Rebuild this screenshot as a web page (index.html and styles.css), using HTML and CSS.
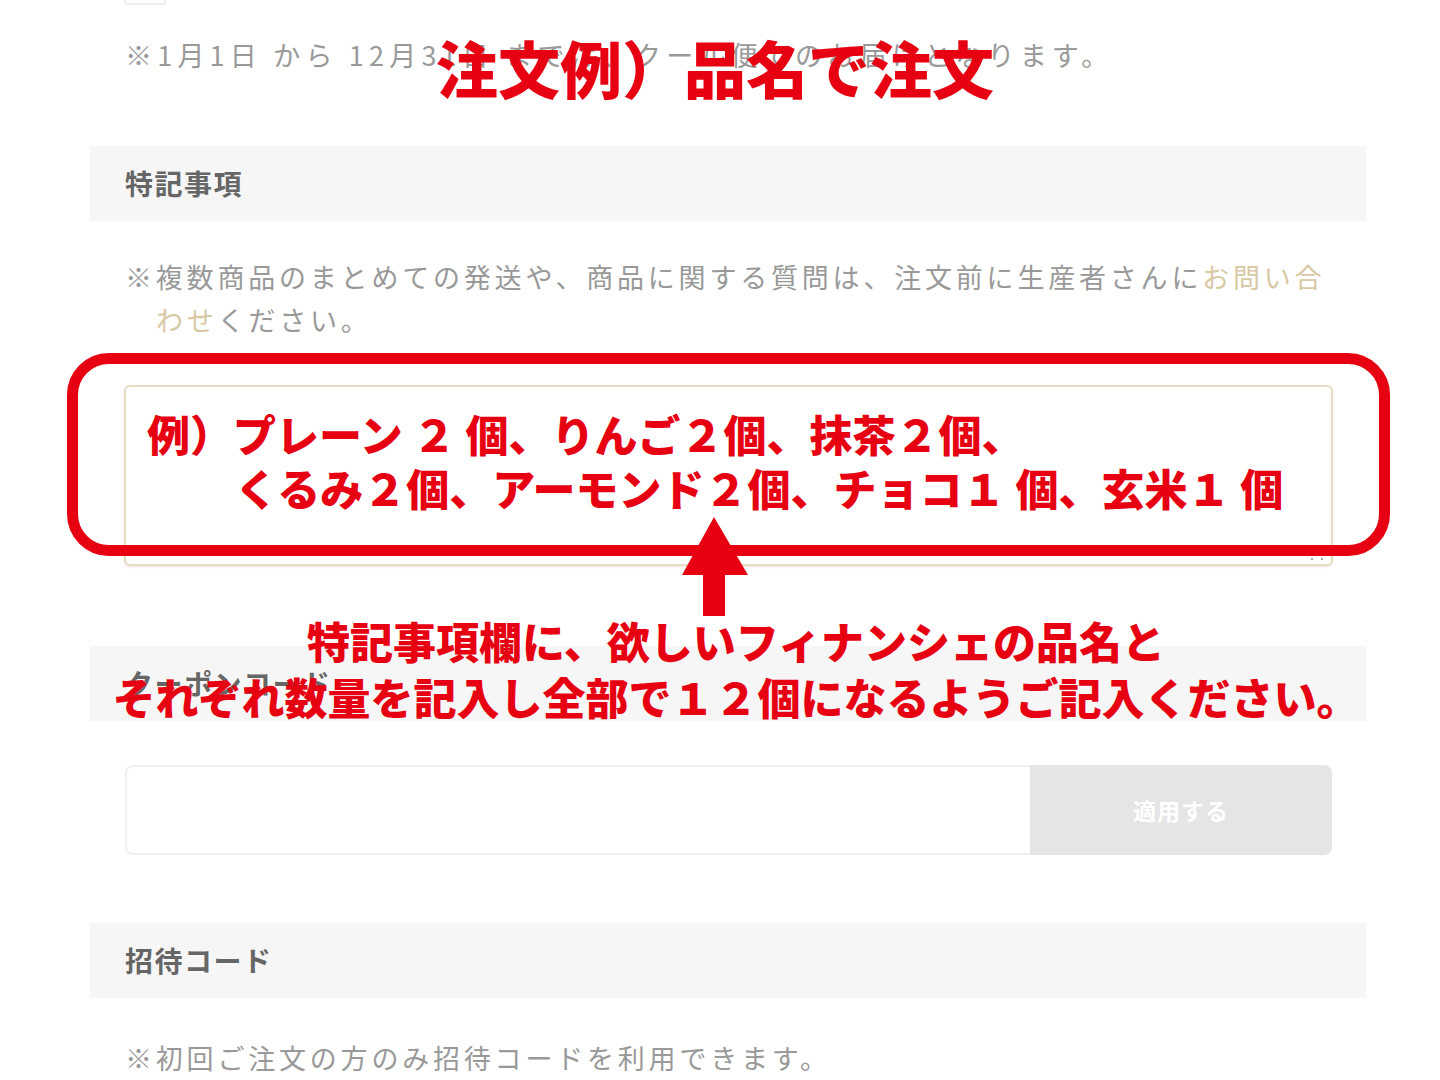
FILE: index.html
```html
<!DOCTYPE html>
<html lang="ja">
<head>
    <meta charset="UTF-8" />
    <title>ご注文手続き</title>
    <link rel="stylesheet" href="styles.css">
</head>
<body>
<div class="page">
  <div class="check"></div>
  <p class="note note-top">※1月1日 から 12月31日 までは、クール便でのお届けとなります。</p>

  <!-- 特記事項 -->
  <h2 class="block-head">特記事項</h2>
  <p class="note note-remarks">※複数商品のまとめての発送や、商品に関する質問は、注文前に生産者さんに<a href="#">お問い合わせ</a>ください。</p>
  <div class="remarks">
    <textarea class="remarks-box"></textarea>
    <span class="grip"></span>
  </div>

  <!-- クーポン -->
  <h2 class="block-head block-coupon">クーポンコード</h2>
  <div class="coupon">
    <input type="text" class="coupon-input" />
    <button type="button" class="coupon-btn">適用する</button>
  </div>

  <!-- 招待コード -->
  <h2 class="block-head block-invite">招待コード</h2>
  <p class="note note-invite">※初回ご注文の方のみ招待コードを利用できます。</p>

  <!-- 注文例の書き込み -->
  <div class="memo memo-title">注文例）品名で注文</div>
  <div class="memo-frame"></div>
  <div class="memo memo-sample">
    <div>例）プレーン ２ 個、りんご２個、抹茶２個、</div>
    <div class="indent">くるみ２個、アーモンド２個、チョコ１ 個、玄米１ 個</div>
  </div>
  <svg class="memo-arrow" width="66" height="100" viewBox="0 0 66 100">
    <polygon points="32,0 66,58 43,58 43,99 21,99 21,58 0,58" fill="#e60012" />
  </svg>
  <div class="memo memo-howto">
    <div>特記事項欄に、欲しいフィナンシェの品名と</div>
    <div>それぞれ数量を記入し全部で１２個になるようご記入ください。</div>
  </div>
</div>
</body>
</html>
```

FILE: styles.css
```css
body {
    margin: 0;
    background-color: #fff;
    font-family: "Noto Sans CJK JP", "Noto Sans", sans-serif;
}
.page {
    position: relative;
    width: 1276px;
    margin-left: 90px;
    padding-bottom: 40px;
}
.check {
    width: 38px;
    height: 3px;
    margin-left: 34px;
    border: 2px solid #eee;
    border-top: none;
    border-radius: 0 0 3px 3px;
}
.note {
    margin: 28px 0 0;
    padding: 0 35px;
    font-size: 27px;
    line-height: 43px;
    letter-spacing: 3.8px;
    color: #999;
}
.note a {
    color: #d8c8a4;
    text-decoration: none;
}
.note-top {
    letter-spacing: 5.2px;
}
.note-remarks {
    margin-top: 34px;
    padding-left: 66px;
    text-indent: -31px;
    padding-right: 30px;
}
.note-invite {
    margin-top: 38px;
}
.block-head {
    margin: 70px 0 0;
    height: 75px;
    padding-left: 35px;
    background-color: #f6f6f6;
    font-size: 28px;
    line-height: 75px;
    letter-spacing: 1.5px;
    font-weight: bold;
    color: #666;
}
.block-coupon {
    margin-top: 80px;
}
.block-invite {
    margin-top: 68px;
}
.remarks {
    position: relative;
    margin: 44px 33px 0 34px;
    height: 181px;
}
.remarks-box {
    display: block;
    box-sizing: border-box;
    width: 100%;
    height: 100%;
    border: 2px solid #e6dcc3;
    border-radius: 6px;
    box-shadow: 0 1px 2px rgba(180, 160, 110, 0.25);
    resize: none;
    background: #fff;
}
.grip {
    position: absolute;
    right: 10px;
    bottom: 6px;
    width: 8px;
    height: 6px;
    border-left: 2px dotted #aaa;
    border-right: 2px dotted #aaa;
}
.coupon {
    display: flex;
    margin: 44px 34px 0 35px;
    height: 90px;
}
.coupon-input {
    flex: 1;
    box-sizing: border-box;
    height: 100%;
    border: 2px solid #f0f0f0;
    border-right: none;
    border-radius: 8px 0 0 8px;
    background: #fff;
}
.coupon-btn {
    width: 302px;
    border: none;
    border-radius: 0 8px 8px 0;
    background-color: #e5e5e5;
    color: #fff;
    font-size: 23px;
    letter-spacing: 1px;
    font-family: "Noto Sans CJK JP", sans-serif;
    font-weight: bold;
}

/* 赤い書き込み */
.memo {
    position: absolute;
    color: #e60012;
    font-weight: 900;
    white-space: nowrap;
}
.memo-title {
    left: 346px;
    top: 32px;
    font-size: 62px;
    line-height: 70px;
    letter-spacing: 0;
}
.memo-frame {
    position: absolute;
    left: -23px;
    top: 353px;
    width: 1323px;
    height: 203px;
    box-sizing: border-box;
    border: 11px solid #e60012;
    border-radius: 42px;
}
.memo-sample {
    left: 57px;
    top: 406px;
    font-size: 43px;
    line-height: 54px;
}
.memo-sample .indent {
    padding-left: 88px;
}
.memo-arrow {
    position: absolute;
    left: 592px;
    top: 517px;
}
.memo-howto {
    left: 16px;
    right: 0;
    top: 612px;
    text-align: center;
    font-size: 43px;
    line-height: 56px;
}
```
